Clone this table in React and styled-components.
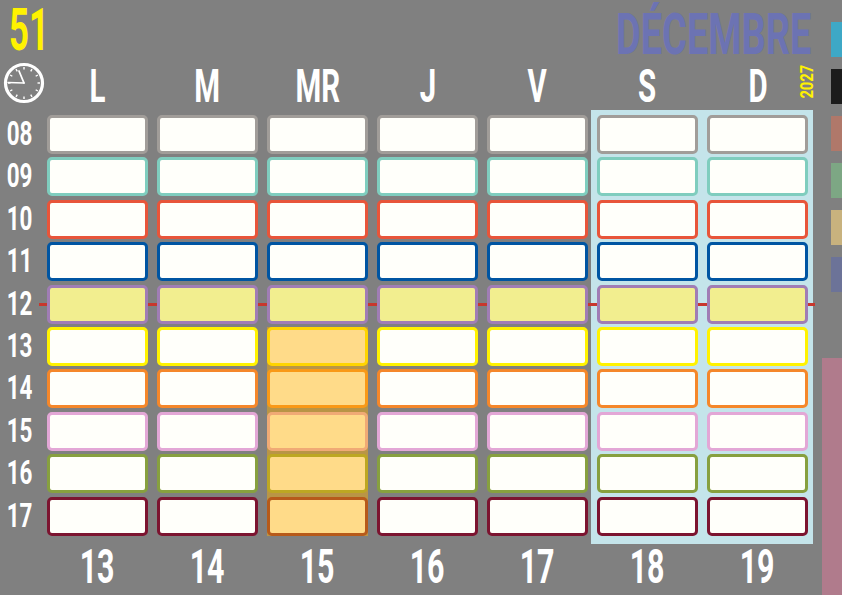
import styled, { createGlobalStyle } from 'styled-components';

const GlobalStyle = createGlobalStyle`
  html, body {
    margin: 0;
    padding: 0;
    background: #808080;
  }
`;

const hours = [
  { h: '08', border: '#a19d99' },
  { h: '09', border: '#7fcdbe' },
  { h: '10', border: '#e8553a' },
  { h: '11', border: '#0055a2' },
  { h: '12', border: '#a07db5', fill: '#f2ee8f' },
  { h: '13', border: '#fff200' },
  { h: '14', border: '#f5872a' },
  { h: '15', border: '#e3a7d6' },
  { h: '16', border: '#87a03f' },
  { h: '17', border: '#7c1430' },
];

const days = ['L', 'M', 'MR', 'J', 'V', 'S', 'D'];
const dates = [13, 14, 15, 16, 17, 18, 19];
const swatches = ['#3ea8c6', '#1c1c1c', '#b0786a', '#7da784', '#c8b27e', '#6c7398'];

const Page = styled.div`
  width: 842px;
  height: 595px;
  overflow: hidden;
  display: flex;
  background: #808080;
  font-family: Roboto, "Liberation Sans", sans-serif;
  font-weight: 700;
`;

const Main = styled.div`
  width: 815px;
  display: flex;
  flex-direction: column;
`;

const TopBar = styled.div`
  height: 60px;
  display: flex;
  justify-content: space-between;
  align-items: flex-start;
  padding: 0 4px 0 9px;
`;

const Squeeze = styled.span`
  display: inline-block;
  line-height: 1;
  white-space: nowrap;
  transform: scaleX(${p => p.$sx});
  transform-origin: ${p => p.$origin || 'center'};
`;

const WeekNo = styled(Squeeze)`
  font-size: 60px;
  line-height: 46px;
  margin-top: 7px;
  color: #fff200;
`;

const Month = styled(Squeeze)`
  font-size: 58px;
  line-height: 48px;
  margin-top: 9.5px;
  color: #6c73b3;
`;

const Grid = styled.div`
  display: grid;
  grid-template-columns: 38px repeat(7, 101px);
  grid-template-rows: 51.6px repeat(10, 39px) 56px;
  column-gap: 9px;
  row-gap: 3.4px;
`;

const Place = styled.div`
  grid-row: ${p => p.$row};
  grid-column: ${p => p.$col};
`;

const HeadCell = styled(Place)`
  display: flex;
  align-items: center;
  justify-content: center;
  color: #fff;
  font-size: 46px;
  z-index: 1;
`;

const ClockBox = styled(Place)`
  align-self: center;
  justify-self: start;
  margin: 0 0 6px 3px;
  display: flex;
`;

const Year = styled(Place)`
  justify-self: end;
  align-self: center;
  margin: 0 -5px 8px 0;
  font-size: 18px;
  line-height: 13px;
  color: #fff200;
  writing-mode: vertical-rl;
  transform: rotate(180deg) scaleY(0.82);
  z-index: 2;
`;

const HourLabel = styled(Place)`
  display: flex;
  align-items: center;
  justify-content: center;
  padding-bottom: 3px;
  color: #fff;
  font-size: 34px;
`;

const Slot = styled(Place)`
  box-sizing: border-box;
  border: 3px solid ${p => p.$border};
  border-radius: 5px;
  background: ${p => p.$fill || '#fffffa'};
  z-index: 2;
`;

const WeekendBand = styled(Place)`
  margin: -5px -5px -8px -6px;
  background: #c4e4ea;
  z-index: 0;
`;

const NoonLine = styled(Place)`
  align-self: center;
  height: 3px;
  margin: 0 -7px 0 -8px;
  background: #c8372d;
  z-index: 1;
`;

const DayMark = styled(Place)`
  background: rgba(255, 175, 0, 0.45);
  z-index: 3;
`;

const DateCell = styled(Place)`
  display: flex;
  align-items: center;
  justify-content: center;
  color: #fff;
  font-size: 49px;
`;

const Side = styled.div`
  flex: 1;
  display: flex;
  flex-direction: column;
  gap: 12px;
  padding-top: 22px;
`;

const Swatch = styled.div`
  height: 35px;
  margin-left: 16px;
  background: ${p => p.$color};
`;

const NoteBar = styled.div`
  margin-top: auto;
  margin-left: 7px;
  height: 237px;
  background: #b07b8c;
`;

const Clock = () => {
  const ticks = Array.from({ length: 12 }, (_, i) => {
    const a = (i * Math.PI) / 6;
    return (
      <line
        key={i}
        x1={21 + Math.sin(a) * 13.5}
        y1={21 - Math.cos(a) * 13.5}
        x2={21 + Math.sin(a) * 16}
        y2={21 - Math.cos(a) * 16}
        stroke="#fff"
        strokeWidth="1.4"
      />
    );
  });
  return (
    <svg width="42" height="42" viewBox="0 0 42 42">
      <circle cx="21" cy="21" r="18.5" fill="none" stroke="#fff" strokeWidth="3.2" />
      {ticks}
      <line x1="21" y1="21" x2="16" y2="9" stroke="#fff" strokeWidth="1.8" strokeLinecap="round" />
      <line x1="21" y1="21" x2="5" y2="20.5" stroke="#fff" strokeWidth="1.4" strokeLinecap="round" />
    </svg>
  );
};

const App = () => {
  return (
    <>
      <GlobalStyle />
      <Page>
        <Main>
          <TopBar>
            <WeekNo $sx={0.58} $origin="left">51</WeekNo>
            <Month $sx={0.655} $origin="right">DÉCEMBRE</Month>
          </TopBar>
          <Grid>
            <ClockBox $row={1} $col={1}>
              <Clock />
            </ClockBox>
            {days.map((d, i) => (
              <HeadCell key={d} $row={1} $col={i + 2}>
                <Squeeze $sx={0.64}>{d}</Squeeze>
              </HeadCell>
            ))}
            <Year $row={1} $col={8}>2027</Year>

            <WeekendBand $row="2 / 12" $col="7 / 9" />
            <NoonLine $row={6} $col="2 / 9" />

            {hours.map((r, ri) => (
              <HourLabel key={r.h} $row={ri + 2} $col={1}>
                <Squeeze $sx={0.66}>{r.h}</Squeeze>
              </HourLabel>
            ))}
            {hours.map((r, ri) =>
              days.map((d, ci) => (
                <Slot
                  key={r.h + d}
                  $row={ri + 2}
                  $col={ci + 2}
                  $border={r.border}
                  $fill={r.fill}
                />
              ))
            )}

            <DayMark $row="7 / 12" $col={4} />

            {dates.map((n, i) => (
              <DateCell key={n} $row={12} $col={i + 2}>
                <Squeeze $sx={0.62}>{n}</Squeeze>
              </DateCell>
            ))}
          </Grid>
        </Main>
        <Side>
          {swatches.map(c => (
            <Swatch key={c} $color={c} />
          ))}
          <NoteBar />
        </Side>
      </Page>
    </>
  );
};

export default App;
